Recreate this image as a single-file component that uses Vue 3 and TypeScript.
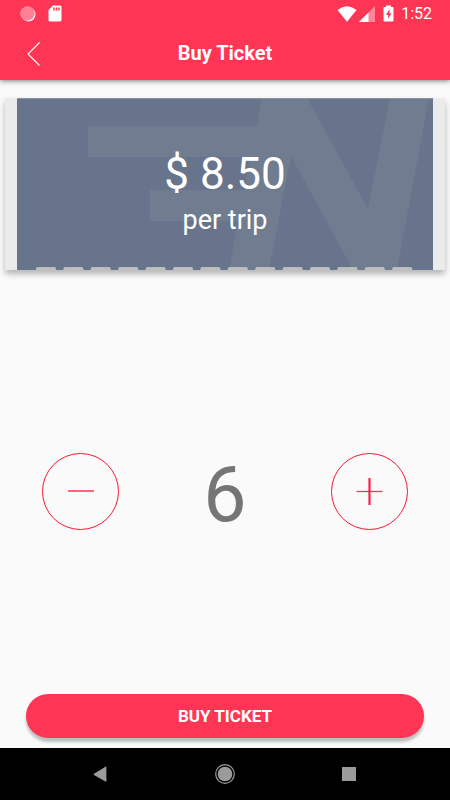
<script setup lang="ts">
import { computed, ref } from 'vue'

const price = ref(8.5)
const quantity = ref(6)
const formattedPrice = computed(() => `$ ${price.value.toFixed(2)}`)

const notchCount = 14
const notches = Array.from({ length: notchCount }, (_, i) => {
  const x = 19 + i * 27.4
  return `M${x} 172V170.500L${x + 1} 169H${x + 19}L${x + 20} 170.500V172Z`
}).join('')

function decrease(): void {
  if (quantity.value > 1) quantity.value -= 1
}

function increase(): void {
  quantity.value += 1
}
</script>

<template>
  <div class="screen">
    <header class="top">
      <div class="status">
        <div class="status-group status-left">
          <svg class="spinner" viewBox="0 0 16 16" aria-hidden="true">
            <circle cx="8.500" cy="8.500" r="7" fill="#fff" />
            <circle cx="7.500" cy="7.500" r="7.200" fill="#ff7f94" />
            <circle cx="7.500" cy="7.500" r="6.500" fill="none" stroke="#ffa5b3" stroke-dasharray="1 1" />
          </svg>
          <svg class="card-icon" viewBox="0 0 14 17" aria-hidden="true">
            <path d="M5 0.500H12Q13.500 0.500 13.500 2V15Q13.500 16.500 12 16.500H2Q0.500 16.500 0.500 15V5Z" fill="#fff" />
            <path d="M6 2.500V5.500M8.500 2.500V5.500M11 2.500V5.500" stroke="#ff3555" stroke-width="1.500" />
          </svg>
        </div>
        <div class="status-group status-right">
          <svg class="wifi" viewBox="0 0 20 16" aria-hidden="true">
            <path d="M0.500 4Q10 -3.400 19.500 4L10 15.800Z" fill="#fff" />
          </svg>
          <svg class="signal" viewBox="0 0 16 16" aria-hidden="true">
            <path d="M0 16L16 0V16Z" fill="#ff8598" />
            <path d="M0 16L9.500 6.500V16Z" fill="#fff" />
          </svg>
          <svg class="battery" viewBox="0 0 11 17" aria-hidden="true">
            <path d="M3 2V0.500H8V2H9.500Q10.500 2 10.500 3V15.500Q10.500 16.500 9.500 16.500H1.500Q0.500 16.500 0.500 15.500V3Q0.500 2 1.500 2Z" fill="#fff" />
            <path d="M6.500 4L3 10H5.200V14L8.500 8.300H6.500Z" fill="#ff3555" />
          </svg>
          <span class="clock">1:52</span>
        </div>
      </div>
      <div class="bar">
        <button class="back" type="button" aria-label="Back">
          <svg viewBox="0 0 14 24" aria-hidden="true">
            <path d="M12.500 0.500L1 12L12.500 23.500" fill="none" stroke="#fff" stroke-width="1.100" />
          </svg>
        </button>
        <h1 class="title">Buy Ticket</h1>
      </div>
    </header>

    <main class="content">
      <section class="ticket">
        <svg class="ticket-art" viewBox="0 0 416 172" preserveAspectRatio="none" aria-hidden="true">
          <defs>
            <linearGradient id="notch-shade" x1="0" y1="0" x2="0" y2="1">
              <stop offset="0" stop-color="#b8b8b8" />
              <stop offset="1" stop-color="#c2c2c2" />
            </linearGradient>
          </defs>
          <rect width="416" height="172" fill="#68748c" />
          <path
            d="M71 28H240L245 0H290L351 111L373 0H412L380 172H336L274 58L252 172H212L221 123H133V92H227L233 59H71Z"
            fill="#707c8f"
          />
          <path d="M0 0.500H416" stroke="#8b94a6" />
          <path :d="notches" fill="url(#notch-shade)" />
        </svg>
        <div class="ticket-text">
          <p class="price">{{ formattedPrice }}</p>
          <p class="unit">per trip</p>
        </div>
      </section>

      <section class="stepper">
        <button class="round" type="button" aria-label="Remove one ticket" @click="decrease">
          <svg viewBox="0 0 28 28" aria-hidden="true">
            <path d="M1 14H27" stroke="#ff3555" stroke-width="1.500" />
          </svg>
        </button>
        <output class="quantity">{{ quantity }}</output>
        <button class="round" type="button" aria-label="Add one ticket" @click="increase">
          <svg viewBox="0 0 28 28" aria-hidden="true">
            <path d="M0.500 14.500H26.500" stroke="#ff3555" stroke-width="1.300" />
            <path d="M13.500 1V28" stroke="#ff2045" stroke-width="2.200" />
          </svg>
        </button>
      </section>

      <button class="buy" type="button">BUY TICKET</button>
    </main>

    <nav class="system">
      <button class="system-button" type="button" aria-label="System back">
        <svg viewBox="0 0 20 20" aria-hidden="true">
          <path d="M15.400 3V17Q15.400 18 14.500 17.500L3 10.900Q2.200 10.300 3 9.700L14.500 2.700Q15.400 2.200 15.400 3Z" fill="#9b9b9b" />
        </svg>
      </button>
      <button class="system-button" type="button" aria-label="Home">
        <svg viewBox="0 0 20 20" aria-hidden="true">
          <circle cx="10" cy="10" r="9.300" fill="none" stroke="#9b9b9b" stroke-width="1.200" />
          <circle cx="10" cy="10" r="7.300" fill="#9b9b9b" />
        </svg>
      </button>
      <button class="system-button" type="button" aria-label="Recent apps">
        <svg viewBox="0 0 20 20" aria-hidden="true">
          <rect x="3" y="3" width="14" height="14" rx="0.500" fill="#9b9b9b" />
        </svg>
      </button>
    </nav>
  </div>
</template>

<style>
body {
  margin: 0;
  background: #fafafa;
}
</style>

<style scoped>
.screen {
  display: flex;
  flex-direction: column;
  min-height: 100vh;
  background: #fafafa;
  color: #fff;
  font-family: Roboto, 'Liberation Sans', sans-serif;
}

button {
  padding: 0;
  border: 0;
  background: none;
  color: inherit;
  font-family: inherit;
  cursor: pointer;
}

svg {
  display: block;
}

.top {
  background: #ff3555;
  box-shadow: 0 1px 5px rgba(0, 0, 0, 0.5);
}

.status {
  display: flex;
  justify-content: space-between;
  height: 27px;
  padding: 0 18px 0 20px;
}

.status-group {
  display: flex;
  align-items: center;
}

.status-left {
  gap: 12px;
}

.spinner {
  width: 16px;
  height: 16px;
}

.card-icon {
  width: 14px;
  height: 17px;
}

.wifi {
  width: 20px;
  height: 16px;
}

.signal {
  width: 16px;
  height: 16px;
  margin: 0 8px 0 2px;
}

.battery {
  width: 11px;
  height: 17px;
}

.clock {
  margin-left: 7px;
  font-size: 16px;
  line-height: 29px;
}

.bar {
  display: grid;
  grid-template-columns: 68px 1fr 68px;
  align-items: center;
  height: 53px;
}

.back {
  display: flex;
  align-items: center;
  justify-content: center;
  height: 53px;
}

.back svg {
  width: 14px;
  height: 24px;
}

.title {
  margin: 0;
  font-size: 20px;
  font-weight: 700;
  line-height: 53px;
  text-align: center;
}

.content {
  display: flex;
  flex: 1;
  flex-direction: column;
}

.ticket {
  display: grid;
  margin: 18px 5px 0;
  padding: 0 12px;
  background: #ebebeb;
  box-shadow: 0 4px 6px rgba(0, 0, 0, 0.28);
}

.ticket-art {
  grid-area: 1 / 1;
  width: 100%;
  height: 172px;
}

.ticket-text {
  grid-area: 1 / 1;
  align-self: center;
  padding-top: 20px;
  text-align: center;
}

.price,
.unit {
  margin: 0;
  font-weight: 400;
}

.price {
  font-size: 44px;
  line-height: 52px;
}

.unit {
  font-size: 27px;
  line-height: 40px;
}

.stepper {
  display: grid;
  flex: 1;
  grid-template-columns: 77px 1fr 77px;
  align-items: center;
  padding: 18px 42px 0;
}

.round {
  display: flex;
  align-items: center;
  justify-content: center;
  height: 77px;
  border: 1px solid #fb1733;
  border-radius: 50%;
}

.round svg {
  width: 28px;
  height: 28px;
}

.quantity {
  padding-top: 8px;
  color: #757575;
  font-size: 77px;
  line-height: 88px;
  text-align: center;
}

.buy {
  height: 44px;
  margin: 0 26px 10px;
  border-radius: 22px;
  background: #ff3555;
  box-shadow: 0 4px 3px rgba(0, 0, 0, 0.24);
  font-size: 17px;
  font-weight: 700;
}

.system {
  display: flex;
  justify-content: center;
  gap: 104px;
  height: 52px;
  background: #000;
}

.system-button svg {
  width: 20px;
  height: 20px;
}
</style>
